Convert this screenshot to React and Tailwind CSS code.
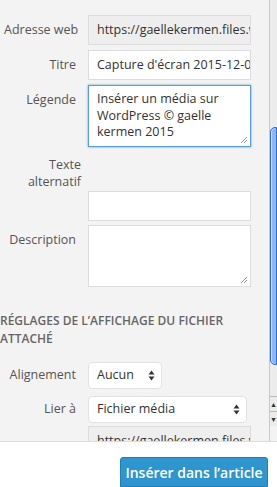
import React from 'react';

function Label({ children, className = '' }) {
  return (
    <div className={`w-[88px] shrink-0 whitespace-nowrap pr-3 pt-[7px] text-right text-[12.5px] leading-[16px] text-[#555] ${className}`}>
      {children}
    </div>
  );
}

function Arrows() {
  return (
    <svg width="7" height="11" viewBox="0 0 7 11" className="shrink-0">
      <path d="M3.5 0.5 L6.5 4.5 H0.5 Z" fill="#333" />
      <path d="M3.5 10.5 L6.5 6.5 H0.5 Z" fill="#333" />
    </svg>
  );
}

function Resize() {
  return (
    <svg width="8" height="8" viewBox="0 0 8 8" className="absolute right-[2px] bottom-[2px]">
      <path d="M1 7 L7 1 M4 7 L7 4" stroke="#777" strokeWidth="0.8" />
    </svg>
  );
}

export default function App() {
  return (
    <div className="flex h-[487px] w-[277px] flex-col overflow-hidden bg-white font-['Open_Sans',sans-serif]">
      <div className="flex min-h-0 flex-1">
        <div className="flex-1 overflow-hidden bg-[#f3f3f3] pt-[15px]">
          <div className="flex">
            <Label className="pl-[4px]">Adresse web</Label>
            <div className="flex h-[30px] w-[163px] items-center overflow-hidden whitespace-nowrap border border-[#ddd] bg-[#eee] pl-[8px] text-[12.5px] text-[#333]">
              https://gaellekermen.files.wordpress.com
            </div>
          </div>
          <div className="mt-[5px] flex">
            <Label>Titre</Label>
            <div className="flex h-[30px] w-[163px] items-center overflow-hidden whitespace-nowrap border border-[#ddd] bg-white pl-[8px] text-[12.5px] text-[#333]">
              Capture d'écran 2015-12-01
            </div>
          </div>
          <div className="mt-[5px] flex">
            <Label>Légende</Label>
            <div className="relative h-[62px] w-[163px] border border-[#5b9dd9] bg-white px-[8px] pt-[5px] text-[12.5px] leading-[16.5px] text-[#333] shadow-[0_0_2px_rgba(30,140,190,0.8)]">
              Insérer un média sur WordPress © gaelle kermen 2015
              <Resize />
            </div>
          </div>
          <div className="mt-[9px] w-[81px] text-right text-[12.5px] leading-[17px] text-[#555]">
            Texte
            <br />
            alternatif
          </div>
          <div className="mt-[1px] flex">
            <div className="w-[88px] shrink-0" />
            <div className="h-[30px] w-[163px] border border-[#ddd] bg-white" />
          </div>
          <div className="mt-[4px] flex">
            <Label>Description</Label>
            <div className="relative h-[62px] w-[163px] border border-[#ddd] bg-white">
              <Resize />
            </div>
          </div>
          <div className="mt-[25px] whitespace-nowrap text-[12px] font-semibold uppercase leading-[18px] text-[#666]">
            Réglages de l’affichage du fichier
            <br />
            attaché
          </div>
          <div className="mt-[14px] flex items-center">
            <div className="w-[88px] shrink-0 whitespace-nowrap pr-3 text-right text-[12.5px] text-[#555]">Alignement</div>
            <div className="flex h-[27px] w-[74px] items-center justify-between rounded-[4px] border border-[#e2e2e2] bg-white pl-[8px] pr-[6px] text-[12.5px] text-[#333]">
              Aucun
              <Arrows />
            </div>
          </div>
          <div className="mt-[7px] flex items-center">
            <div className="w-[88px] shrink-0 whitespace-nowrap pr-3 text-right text-[12.5px] text-[#555]">Lier à</div>
            <div className="flex h-[27px] w-[159px] items-center justify-between rounded-[4px] border border-[#e2e2e2] bg-white pl-[8px] pr-[6px] text-[12.5px] text-[#333]">
              Fichier média
              <Arrows />
            </div>
          </div>
          <div className="mt-[3px] flex">
            <div className="w-[88px] shrink-0" />
            <div className="flex h-[30px] w-[163px] items-center overflow-hidden whitespace-nowrap border border-[#ddd] bg-[#eee] pl-[8px] text-[12.5px] text-[#333]">
              https://gaellekermen.files.wordpress.com
            </div>
          </div>
        </div>
        <div className="flex w-[8px] flex-col border-l border-[#c8c8c8] bg-[#ececec]">
          <div className="h-[127px]" />
          <div className="h-[238px] rounded-l-[5px] border border-[#2b6fd6] bg-[#8fb7ee] shadow-[inset_1px_0_0_#cfe0fa]" />
          <div className="flex-1" />
          <div className="flex h-[15px] items-center justify-center border-t border-[#bbb] text-[7px] leading-none text-[#333]">▲</div>
          <div className="flex h-[15px] items-center justify-center border-t border-[#bbb] text-[7px] leading-none text-[#333]">▼</div>
          <div className="h-[15px] bg-[#f3f3f3]" />
        </div>
      </div>
      <div className="flex h-[46px] shrink-0 items-end justify-end border-t border-[#ddd] bg-white pr-[9px]">
        <div className="flex h-[30px] w-[148px] items-center justify-center rounded-t-[3px] border border-[#1f7db8] bg-[#2e95cf] text-[14px] font-semibold text-white">
          Insérer dans l’article
        </div>
      </div>
    </div>
  );
}
